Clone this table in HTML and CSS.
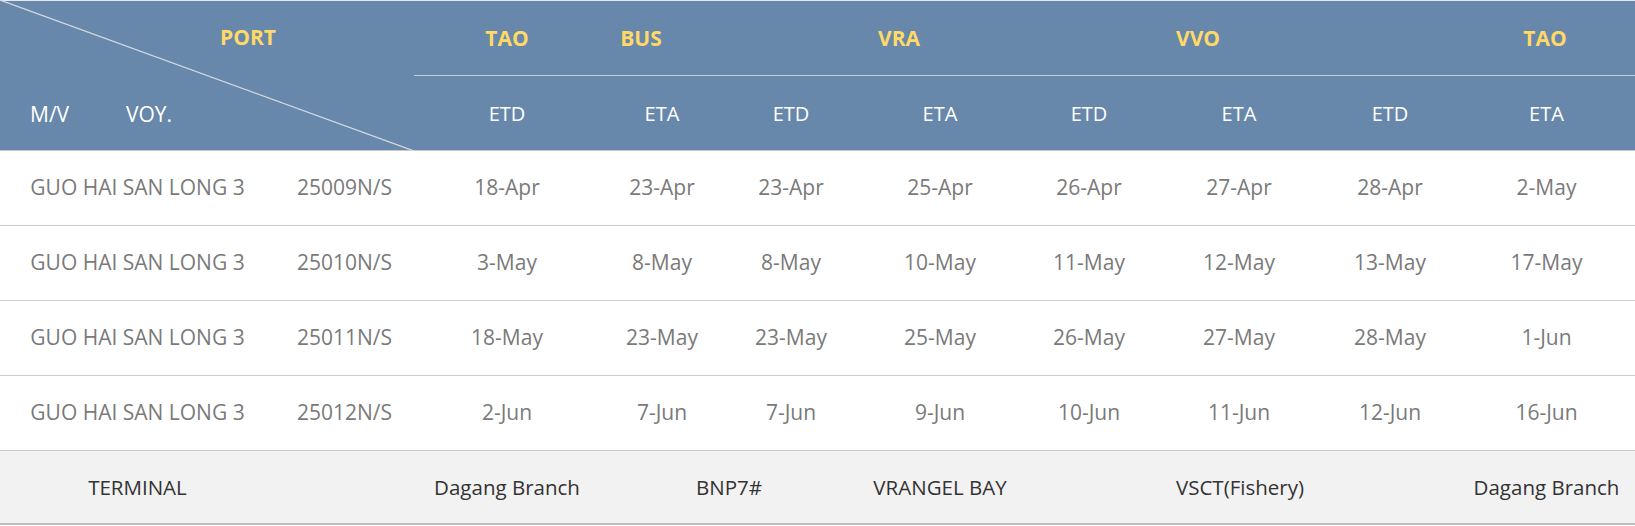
FILE: index.html
```html
<!DOCTYPE html>
<html lang="en">
<head>
<meta charset="utf-8">
<title>Schedule</title>
<link rel="stylesheet" href="styles.css">
</head>
<body>
<div class="sched">
  <div class="head">
    <div class="corner">
      <svg class="diag" viewBox="0 0 414 151" preserveAspectRatio="none"><line x1="0" y1="0" x2="414" y2="151" stroke="#d3d9e1" stroke-width="1.2"/></svg>
      <div class="port-lbl">PORT</div>
      <div class="mv-voy"><span class="mv">M/V</span><span class="voy">VOY.</span></div>
    </div>
    <div class="right">
      <div class="ports">
        <div>TAO</div><div>BUS</div><div>VRA</div><div>VVO</div><div></div><div>TAO</div>
      </div>
      <div class="legs">
        <div>ETD</div><div>ETA</div><div>ETD</div><div>ETA</div><div>ETD</div><div>ETA</div><div>ETD</div><div>ETA</div>
      </div>
    </div>
  </div>

  <div class="row">
    <div>GUO HAI SAN LONG 3</div><div>25009N/S</div>
    <div>18-Apr</div><div>23-Apr</div><div>23-Apr</div><div>25-Apr</div><div>26-Apr</div><div>27-Apr</div><div>28-Apr</div><div>2-May</div>
  </div>
  <div class="row">
    <div>GUO HAI SAN LONG 3</div><div>25010N/S</div>
    <div>3-May</div><div>8-May</div><div>8-May</div><div>10-May</div><div>11-May</div><div>12-May</div><div>13-May</div><div>17-May</div>
  </div>
  <div class="row">
    <div>GUO HAI SAN LONG 3</div><div>25011N/S</div>
    <div>18-May</div><div>23-May</div><div>23-May</div><div>25-May</div><div>26-May</div><div>27-May</div><div>28-May</div><div>1-Jun</div>
  </div>
  <div class="row">
    <div>GUO HAI SAN LONG 3</div><div>25012N/S</div>
    <div>2-Jun</div><div>7-Jun</div><div>7-Jun</div><div>9-Jun</div><div>10-Jun</div><div>11-Jun</div><div>12-Jun</div><div>16-Jun</div>
  </div>

  <div class="row foot">
    <div class="t-label">TERMINAL</div>
    <div class="t-c1">Dagang Branch</div>
    <div class="t-c23">BNP7#</div>
    <div class="t-c4">VRANGEL BAY</div>
    <div class="t-c57">VSCT(Fishery)</div>
    <div class="t-c8">Dagang Branch</div>
  </div>
</div>
</body>
</html>
```

FILE: styles.css
```css
html, body {
  margin: 0;
  padding: 0;
  background: #ffffff;
}

body {
  font-family: "Open Sans", "Noto Sans", "DejaVu Sans", sans-serif;
}

.sched {
  --cols: 275px 139px 186px 124px 134px 164px 134px 166px 136px 177px;
  width: 1635px;
}

.head {
  display: flex;
  height: 151px;
  box-sizing: border-box;
  background: #6788ab;
  border-top: 1px solid #e4e8ee;
  border-bottom: 1px solid #c9c9c9;
}

.corner {
  position: relative;
  width: 414px;
  display: flex;
  flex-direction: column;
}

.diag {
  position: absolute;
  left: 0;
  top: -1px;
  width: 414px;
  height: 151px;
}

.port-lbl {
  height: 72px;
  display: flex;
  align-items: center;
  padding-left: 220px;
  color: #ffd966;
  font-weight: 700;
  font-size: 21px;
}

.mv-voy {
  flex: 1;
  display: flex;
  align-items: center;
  color: #ffffff;
  font-size: 21px;
  padding-top: 4px;
}

.mv {
  margin-left: 30px;
  width: 96px;
}

.right {
  flex: 1;
  display: flex;
  flex-direction: column;
}

.ports {
  display: grid;
  grid-template-columns: 186px 82px 434px 164px 175px 180px;
  height: 74px;
  border-bottom: 1px solid #c5cfdb;
  align-items: center;
  color: #ffd966;
  font-weight: 700;
  font-size: 21px;
  text-align: center;
}

.legs {
  flex: 1;
  display: grid;
  grid-template-columns: 186px 124px 134px 164px 134px 166px 136px 177px;
  align-items: center;
  text-align: center;
  color: #ffffff;
  font-size: 20px;
}

.row {
  display: grid;
  grid-template-columns: var(--cols);
  height: 75px;
  box-sizing: border-box;
  border-bottom: 1px solid #cccccc;
  align-items: center;
  text-align: center;
  color: #7a7a7a;
  font-size: 21px;
  padding-bottom: 3px;
}

.foot {
  height: 74px;
  background: #f2f2f2;
  color: #333333;
  border-bottom: 2px solid #bdbdbd;
  font-size: 20.5px;
  padding-bottom: 0;
}

.t-label { grid-column: 1 / 3; padding-right: 139px; }
.t-c1 { grid-column: 3; }
.t-c23 { grid-column: 4 / 6; }
.t-c4 { grid-column: 6; }
.t-c57 { grid-column: 7 / 10; }
.t-c8 { grid-column: 10; }
```
